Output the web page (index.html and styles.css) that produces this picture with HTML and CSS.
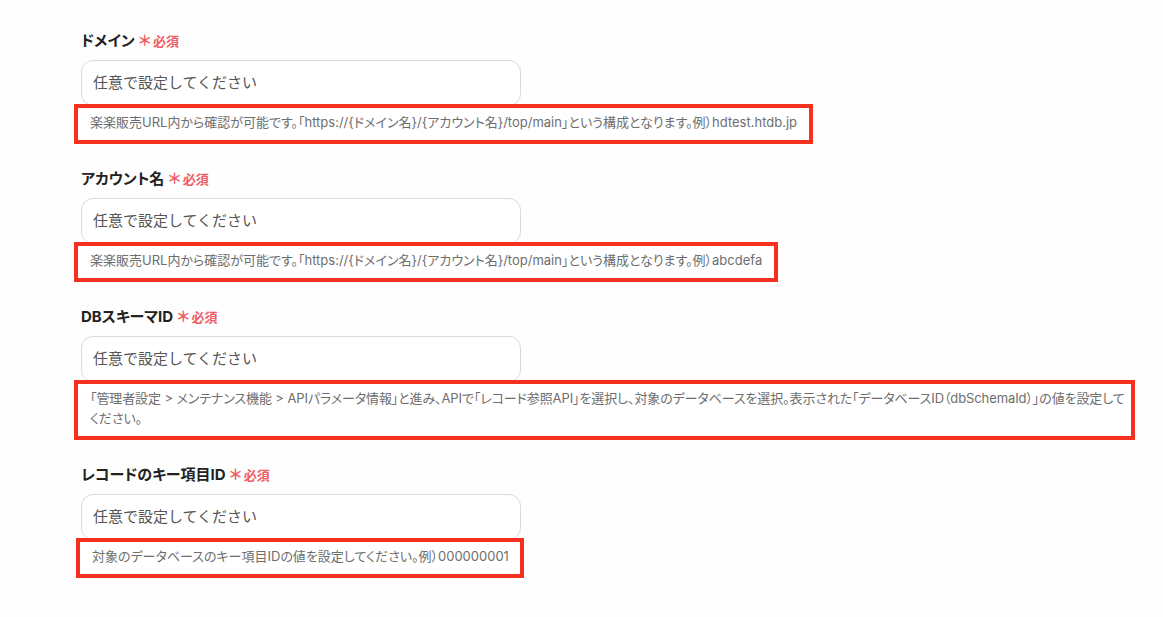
FILE: index.html
```html
<!DOCTYPE html>
<html lang="ja">
<head>
<meta charset="utf-8">
<link rel="stylesheet" href="styles.css">
</head>
<body>
<div class="form">
  <div class="field">
    <div class="label">ドメイン<span class="req"><span class="star">＊</span>必須</span></div>
    <div class="input">任意で設定してください</div>
    <div class="help">楽楽販売URL内から確認が可能です。「https://{ドメイン名}/{アカウント名}/top/main」という構成となります。例）hdtest.htdb.jp</div>
  </div>
  <div class="field">
    <div class="label">アカウント名<span class="req"><span class="star">＊</span>必須</span></div>
    <div class="input">任意で設定してください</div>
    <div class="help">楽楽販売URL内から確認が可能です。「https://{ドメイン名}/{アカウント名}/top/main」という構成となります。例）abcdefa</div>
  </div>
  <div class="field">
    <div class="label">DBスキーマID<span class="req"><span class="star">＊</span>必須</span></div>
    <div class="input">任意で設定してください</div>
    <div class="help help-wide">「管理者設定 &gt; メンテナンス機能 &gt; APIパラメータ情報」と進み、APIで「レコード参照API」を選択し、対象のデータベースを選択。表示された「データベースID（dbSchemaId）」の値を設定してください。</div>
  </div>
  <div class="field">
    <div class="label">レコードのキー項目ID<span class="req"><span class="star">＊</span>必須</span></div>
    <div class="input">任意で設定してください</div>
    <div class="help help-last">対象のデータベースのキー項目IDの値を設定してください。例）000000001</div>
  </div>
</div>
</body>
</html>
```

FILE: styles.css
```css
html, body {
  margin: 0;
  padding: 0;
  background: #fefefe;
}
body {
  font-family: "Inter", "Noto Sans CJK JP", sans-serif;
  color: #222;
}
.form {
  display: flex;
  flex-direction: column;
  gap: 25px;
  padding: 31px 0 0 81px;
}
.field {
  display: flex;
  flex-direction: column;
  align-items: flex-start;
}
.label {
  font-size: 15px;
  font-weight: 700;
  line-height: 20px;
  height: 20px;
  color: #222;
  margin-bottom: 9px;
  display: flex;
  align-items: center;
  font-feature-settings: "palt";
}
.req {
  color: #ef5d66;
  font-size: 13px;
  font-weight: 700;
  margin-left: 4px;
  display: inline-flex;
  align-items: center;
}
.star {
  font-size: 15px;
  margin-right: 2px;
  font-weight: 700;
}
.input {
  box-sizing: border-box;
  width: 440px;
  height: 46px;
  border: 1px solid #d6dae2;
  border-radius: 12px;
  background: #fff;
  padding: 0 11px;
  font-size: 15px;
  line-height: 44px;
  color: #555;
}
.help {
  position: relative;
  box-sizing: border-box;
  margin: -2px 0 0 -7px;
  border: 4px solid #f5301e;
  background: #fff;
  padding: 4px 12px 8px 12px;
  font-size: 13px;
  line-height: 20px;
  color: #6e6e6e;
  white-space: nowrap;
  font-feature-settings: "palt";
}
.help-wide {
  width: 1061px;
  padding-right: 3px;
  letter-spacing: -0.1px;
  white-space: normal;
}
.help-last {
  margin-left: -5px;
  padding-right: 11px;
}
```
